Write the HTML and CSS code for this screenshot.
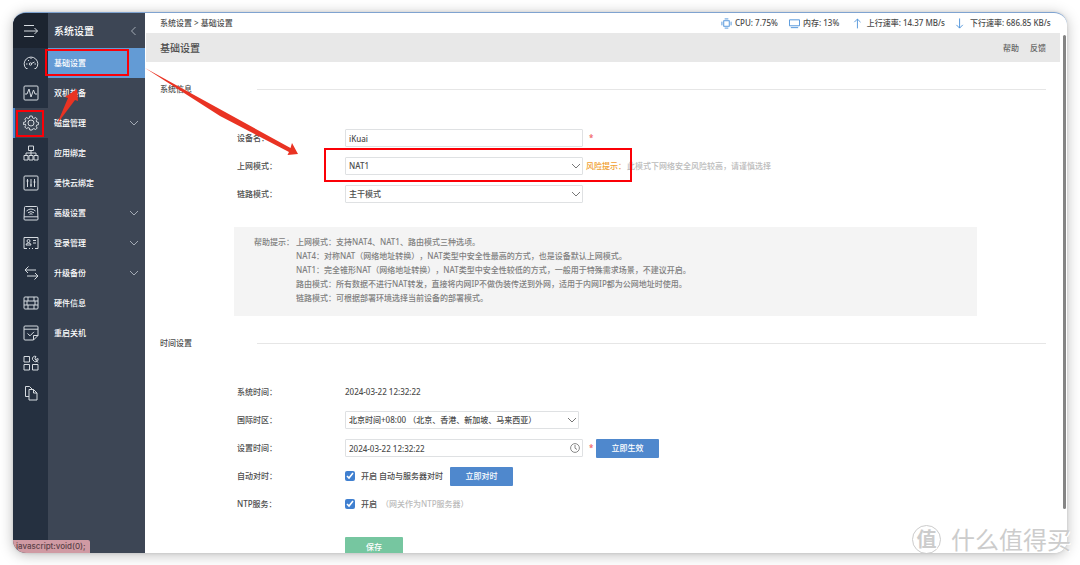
FILE: index.html
```html
<!DOCTYPE html>
<html lang="zh-CN">
<head>
<meta charset="utf-8">
<title>基础设置</title>
<link rel="stylesheet" href="styles.css">
</head>
<body>
<div class="window">
  <nav class="rail" aria-label="主导航">
    <button class="rail-item rail-toggle" aria-label="展开"><svg viewBox="0 0 16 16"><path d="M1 2.500h10M1 8h13.500M1 13.500h10M11.500 5l3 3-3 3"/></svg></button>
    <button class="rail-item" aria-label="状态"><svg viewBox="0 0 16 16"><path d="M4.500 13.500H3a6.800 6.800 0 1 1 10 0h-1.500M3 9h1.500M11.500 9H13M5 5l1 1M8.500 8.500L11.500 7M8 3v1"/><circle cx="7.500" cy="9" r="1.200"/></svg></button>
    <button class="rail-item" aria-label="监控"><svg viewBox="0 0 16 16"><rect x="1" y="1" width="14" height="14" rx="1"/><path d="M2 9h2l2-5 2 8 2.500-7 1.500 4h2"/></svg></button>
    <button class="rail-item active" aria-label="系统设置"><svg viewBox="0 0 16 16"><path d="M6.800 1h2.400l.4 1.900 1.300.6 1.700-1.100 1.600 1.700-1 1.700.5 1.200 1.900.4v2.200l-1.900.5-.5 1.200 1 1.700-1.600 1.600-1.700-1-1.300.5L9.200 15H6.800l-.4-1.900-1.300-.5-1.700 1-1.600-1.600 1-1.700-.5-1.200L.4 9.600V7.400L2.300 7l.5-1.200-1-1.700 1.600-1.700 1.700 1.100 1.300-.6z"/><circle cx="8" cy="8" r="3"/></svg></button>
    <button class="rail-item" aria-label="网络"><svg viewBox="0 0 16 16"><path d="M5.500 1h5v4.500h-5zM1 10.500h4V15H1zM6 10.500h4V15H6zM11 10.500h4V15h-4zM8 5.500v5M3 10.500V8h10v2.500"/></svg></button>
    <button class="rail-item" aria-label="流控"><svg viewBox="0 0 16 16"><rect x="1" y="1" width="14" height="14" rx="1"/><path d="M4.500 4v8M8 4v8M11.500 4v8M3.500 6h2M7 10h2M10.500 7h2"/></svg></button>
    <button class="rail-item" aria-label="无线"><svg viewBox="0 0 16 16"><path d="M2.500 1.500h11q1 0 1 1L15 14q0 1-1 1H2q-1 0-1-1l.5-11.500q0-1 1-1zM1 11.800h14M3.500 6q4.500-4 9 0M5 7.800q3-2.500 6 0M6.500 9.300q1.500-1.200 3 0"/></svg></button>
    <button class="rail-item" aria-label="认证"><svg viewBox="0 0 16 16"><path d="M4 13.500H1v-11h14v11h-3M6 13.500h1M9 13.500h1M3 10q0-2 2.500-2T8 10zM10 5.500h3M10 8h3"/><circle cx="5.500" cy="6" r="1.500"/></svg></button>
    <button class="rail-item" aria-label="行为"><svg viewBox="0 0 16 16"><path d="M13 5H2l3.500-3.500M2 5l3 3M4 11h11l-3-3M15 11l-3.500 3.500"/></svg></button>
    <button class="rail-item" aria-label="防火墙"><svg viewBox="0 0 16 16"><rect x="1" y="2" width="14" height="12" rx="1"/><path d="M1 6h14M1 10h14M5 2v4M11 2v4M4 6v4M12 6v4M5 10v4M11 10v4"/></svg></button>
    <button class="rail-item" aria-label="日志"><svg viewBox="0 0 16 16"><path d="M10.500 15H2q-1 0-1-1V2q0-1 1-1h12q1 0 1 1v8.500L10.500 15v-4.500H15M1 4.200h14M4.500 8.500l2.500 2.300 4-4"/></svg></button>
    <button class="rail-item" aria-label="应用"><svg viewBox="0 0 16 16"><path d="M1 1.500h5.500V7H1zM1 9.500h5.500V15H1zM9.500 9.500H15V15H9.500zM9.500 4.500a2.500 2.500 0 0 1 3.500-3l-1.200 2 1.200 1 2-1a2.500 2.500 0 0 1-3.500 3zM12 4l3 3.500"/></svg></button>
    <button class="rail-item" aria-label="文档"><svg viewBox="0 0 16 16"><path d="M6 11.500H2.500v-10h4L9 4M6 4.500h4.500L14 8v7H6zM10.500 4.500V8H14"/></svg></button>
  </nav>

  <aside class="menu">
    <header class="menu-head"><span>系统设置</span><svg class="chev" viewBox="0 0 8 8"><path d="M5.500 0l-4 4 4 4"/></svg></header>
    <a class="menu-item current" href="#">基础设置</a>
    <a class="menu-item" href="#">双机热备</a>
    <a class="menu-item" href="#">磁盘管理<svg class="chev" viewBox="0 0 8 8"><path d="M0 2l4 4 4-4"/></svg></a>
    <a class="menu-item" href="#">应用绑定</a>
    <a class="menu-item" href="#">爱快云绑定</a>
    <a class="menu-item" href="#">高级设置<svg class="chev" viewBox="0 0 8 8"><path d="M0 2l4 4 4-4"/></svg></a>
    <a class="menu-item" href="#">登录管理<svg class="chev" viewBox="0 0 8 8"><path d="M0 2l4 4 4-4"/></svg></a>
    <a class="menu-item" href="#">升级备份<svg class="chev" viewBox="0 0 8 8"><path d="M0 2l4 4 4-4"/></svg></a>
    <a class="menu-item" href="#">硬件信息</a>
    <a class="menu-item" href="#">重启关机</a>
  </aside>

  <main class="main">
    <div class="topbar">
      <div class="crumbs">系统设置 &gt; 基础设置</div>
      <div class="stats">
        <span class="stat stat-cpu"><svg viewBox="0 0 12 12"><rect x="3" y="3" width="6" height="6"/><path d="M4 1h4M4 11h4M1 4v4M11 4v4"/></svg>CPU: 7.75%</span>
        <span class="stat stat-mem"><svg viewBox="0 0 12 12"><path d="M.5 2h11v6.500H.5zM2 10.500h8"/></svg>内存: 13%</span>
        <span class="stat stat-up"><svg viewBox="0 0 12 12"><path d="M5 11.500V1M1.500 4.500L5 1l3.500 3.500"/></svg>上行速率: 14.37 MB/s</span>
        <span class="stat stat-down"><svg viewBox="0 0 12 12"><path d="M5 .5V11M1.500 7.500L5 11l3.500-3.500"/></svg>下行速率: 686.85 KB/s</span>
      </div>
    </div>
    <div class="body">
      <header class="titlebar">
        <h1>基础设置</h1>
        <div class="links"><a href="#">帮助</a><a href="#">反馈</a></div>
      </header>
      <form class="content">
        <h2 class="section">系统信息</h2>
        <div class="row">
          <label class="label" for="name">设备名：</label>
          <input class="field" id="name" type="text" value="iKuai"><span class="req">*</span>
        </div>
        <div class="row">
          <label class="label" for="net">上网模式：</label>
          <div class="picker"><select class="field" id="net"><option>NAT1</option></select><svg class="chev" viewBox="0 0 8 8"><path d="M0 2l4 4 4-4"/></svg></div>
          <span class="risk">风险提示：</span><span class="muted">此模式下网络安全风险较高，请谨慎选择</span>
        </div>
        <div class="row">
          <label class="label" for="link">链路模式：</label>
          <div class="picker"><select class="field" id="link"><option>主干模式</option></select><svg class="chev" viewBox="0 0 8 8"><path d="M0 2l4 4 4-4"/></svg></div>
        </div>
        <div class="help">
          <span>帮助提示：</span>
          <div>
            <p>上网模式：支持NAT4、NAT1、路由模式三种选项。</p>
            <p>NAT4：对称NAT（网络地址转换），NAT类型中安全性最高的方式，也是设备默认上网模式。</p>
            <p>NAT1：完全锥形NAT（网络地址转换），NAT类型中安全性较低的方式，一般用于特殊需求场景，不建议开启。</p>
            <p>路由模式：所有数据不进行NAT转发，直接将内网IP不做伪装传送到外网，适用于内网IP都为公网地址时使用。</p>
            <p>链路模式：可根据部署环境选择当前设备的部署模式。</p>
          </div>
        </div>
        <h2 class="section">时间设置</h2>
        <div class="row"><span class="label">系统时间：</span><span>2024-03-22 12:32:22</span></div>
        <div class="row">
          <label class="label" for="zone">国际时区：</label>
          <div class="picker zone"><select class="field" id="zone"><option>北京时间+08:00 （北京、香港、新加坡、马来西亚）</option></select><svg class="chev" viewBox="0 0 8 8"><path d="M0 2l4 4 4-4"/></svg></div>
        </div>
        <div class="row">
          <label class="label" for="time">设置时间：</label>
          <div class="picker"><input class="field" id="time" type="text" value="2024-03-22 12:32:22"><svg class="clock" viewBox="0 0 10 10"><circle cx="5" cy="5" r="4.400"/><path d="M5 2v3.200l2 1.300"/></svg></div>
          <span class="req">*</span><button class="btn" type="button">立即生效</button>
        </div>
        <div class="row">
          <span class="label">自动对时：</span>
          <label class="check"><input type="checkbox" checked>开启 自动与服务器对时</label><button class="btn sync" type="button">立即对时</button>
        </div>
        <div class="row">
          <span class="label">NTP服务：</span>
          <label class="check"><input type="checkbox" checked>开启</label><span class="muted">（网关作为NTP服务器）</span>
        </div>
        <button class="btn save" type="button">保存</button>
      </form>
    </div>
    <div class="thumb"></div>
  </main>
  <div class="status">javascript:void(0);</div>
</div>

<svg class="marks" width="640" height="190" viewBox="0 0 640 190">
  <g fill="none" stroke="#fb0007" stroke-width="2">
    <rect x="46" y="50" width="82" height="25"/>
    <rect x="17" y="111" width="26" height="25"/>
    <rect x="325" y="149" width="306" height="32"/>
  </g>
  <g fill="#e93323">
    <path d="M145 68l145.500 80 1.500-5L298 154l-10.500 1 1.500-3L220 116z"/>
    <path d="M57 124l11-26-3-1 12-8 1 12-3-1z"/>
  </g>
</svg>
<div class="watermark"><span class="seal">值</span><span>什么值得买</span></div>
</body>
</html>
```

FILE: styles.css
```css
* { box-sizing: border-box; }

body {
  position: relative;
  height: 100vh;
  margin: 0;
  padding: 12px 13px;
  overflow: hidden;
  background: #fff;
  color: #4c4c4c;
  font: 500 8px/14px "Noto Sans", "Noto Sans CJK SC", sans-serif;
  text-spacing-trim: space-all;
}

h1, h2, p { margin: 0; }
a { color: inherit; text-decoration: none; }
button, input, select { font: inherit; color: inherit; }
svg { fill: none; stroke: currentColor; }

.window {
  position: relative;
  display: flex;
  height: 100%;
  overflow: hidden;
  border-top: 1px solid #7fa3d0;
  border-radius: 13px;
  background: #fff;
}

body::before {
  content: "";
  position: absolute;
  inset: 12px 13px;
  border-radius: 13px;
  box-shadow: 0 0 3px rgba(0, 0, 0, .12), 0 2px 14px rgba(0, 0, 0, .26);
}

/* icon rail */
.rail {
  flex: none;
  width: 35px;
  background: #253040;
}
.rail-item {
  display: flex;
  align-items: center;
  justify-content: center;
  width: 100%;
  height: 30px;
  padding: 0;
  border: 0;
  background: none;
  color: #d6dbe0;
}
.rail-item svg { width: 16px; height: 16px; }
.rail-toggle { height: 35px; background: #1c2430; }
.rail-item.active {
  background: #3d4655;
  box-shadow: inset 2px 0 #4a86d0;
}

/* section menu */
.menu {
  flex: none;
  width: 97px;
  background: #3d4655;
  color: #fff;
}
.menu-head, .menu-item {
  display: flex;
  align-items: center;
  justify-content: space-between;
  height: 30px;
  padding: 0 7px 0 6px;
}
.menu-head { height: 35px; font-size: 10px; }
.menu-item.current { background: #639bd5; }
.chev { width: 8px; height: 8px; color: #a4abb5; }

/* page */
.main {
  position: relative;
  flex: 1;
  min-width: 0;
  margin-left: 1px;
}
.topbar {
  display: flex;
  align-items: center;
  justify-content: space-between;
  height: 20px;
  padding: 0 13px 0 14px;
}
.stats { display: flex; gap: 10px; }
.stat { display: flex; align-items: center; gap: 3px; white-space: nowrap; }
.stat svg { width: 11px; height: 11px; color: #4a90d9; }
.stat-cpu { width: 58px; }
.stat-mem { width: 54px; }
.stat-up { width: 92px; }
.stat-down { width: 99px; }
.stat-down svg { margin-right: 1px; }

.body { margin-right: 7px; }
.titlebar {
  display: flex;
  align-items: center;
  justify-content: space-between;
  height: 29px;
  padding: 0 14px;
  background: #e8e8e8;
}
h1 { font-size: 10px; font-weight: 500; }
.links { display: flex; gap: 11px; color: #666; }

.content { padding: 20px 14px 0; }
.section {
  display: flex;
  align-items: center;
  height: 14px;
  margin-bottom: 28px;
  font-size: 8px;
  font-weight: 500;
}
.section::after {
  content: "";
  flex: 1;
  height: 1px;
  margin-left: 65px;
  background: #e6e6e6;
}
.row {
  display: flex;
  align-items: center;
  height: 28px;
  padding-left: 77px;
  white-space: nowrap;
}
.label { flex: none; width: 108px; }
.field {
  display: block;
  width: 238px;
  height: 18px;
  padding: 0 3px;
  border: 1px solid #dfe1e3;
  border-radius: 1px;
  background: #fff;
  appearance: none;
}
.picker { position: relative; }
.zone .field { width: 234px; }
.picker .chev {
  position: absolute;
  top: 5px;
  right: 3px;
  color: #777;
}
.clock {
  position: absolute;
  top: 4px;
  right: 3px;
  width: 10px;
  height: 10px;
  color: #888;
}
.req { width: 13px; padding-left: 6px; color: #f0555a; }
.risk { width: 44px; padding-left: 3px; color: #f0a030; }
.muted { color: #bbb; }
.btn {
  width: 63px;
  height: 19px;
  padding: 0;
  border: 0;
  border-radius: 1px;
  background: #4f88cd;
  color: #fff;
}
.sync { margin-left: 3px; }
.save {
  display: block;
  width: 58px;
  height: 20px;
  margin: 19px 0 0 185px;
  background: #76c6a0;
}
.check { display: flex; align-items: center; margin-right: 4px; }
.check input {
  width: 10px;
  height: 10px;
  margin: 0 6px 0 0;
  accent-color: #4080d0;
}
.help {
  display: flex;
  gap: 2px;
  margin: 19px 69px 20px 74px;
  padding: 8px 20px 11px;
  background: #f4f4f4;
  color: #808080;
}

.thumb {
  position: absolute;
  top: 22px;
  right: 1px;
  bottom: 44px;
  width: 3px;
  border-radius: 2px;
  background: #858585;
}
.status {
  position: absolute;
  left: 0;
  bottom: 0;
  padding: 0 4px 0 3px;
  border-radius: 0 2px 0 0;
  background: #d09aa3;
  color: #5b4248;
  font: 500 8px/13px Inter, sans-serif;
}

/* callouts */
.marks {
  position: absolute;
  top: 0;
  left: 0;
  stroke: none;
  pointer-events: none;
}
.watermark {
  position: absolute;
  right: 9px;
  bottom: 11px;
  display: flex;
  align-items: center;
  gap: 10px;
  color: #ccc;
  font: 400 24px/30px "Noto Sans CJK SC", sans-serif;
  text-shadow: 1px 1px #fff;
}
.seal {
  width: 29px;
  height: 29px;
  border: 1px solid #ccc;
  border-radius: 50%;
  font-size: 20px;
  font-weight: 700;
  line-height: 26px;
  text-align: center;
}
```
